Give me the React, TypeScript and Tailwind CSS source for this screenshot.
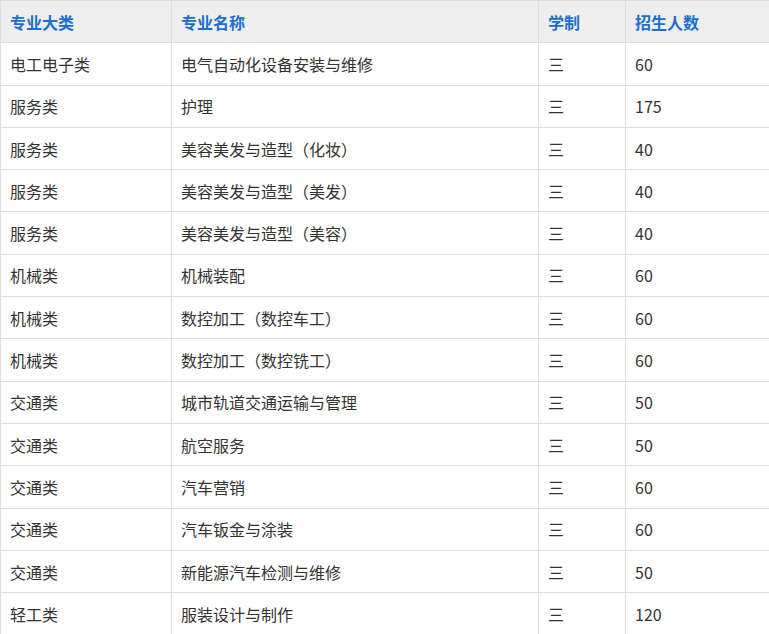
const rows: [string, string, string, string][] = [
  ["电工电子类", "电气自动化设备安装与维修", "三", "60"],
  ["服务类", "护理", "三", "175"],
  ["服务类", "美容美发与造型（化妆）", "三", "40"],
  ["服务类", "美容美发与造型（美发）", "三", "40"],
  ["服务类", "美容美发与造型（美容）", "三", "40"],
  ["机械类", "机械装配", "三", "60"],
  ["机械类", "数控加工（数控车工）", "三", "60"],
  ["机械类", "数控加工（数控铣工）", "三", "60"],
  ["交通类", "城市轨道交通运输与管理", "三", "50"],
  ["交通类", "航空服务", "三", "50"],
  ["交通类", "汽车营销", "三", "60"],
  ["交通类", "汽车钣金与涂装", "三", "60"],
  ["交通类", "新能源汽车检测与维修", "三", "50"],
  ["轻工类", "服装设计与制作", "三", "120"],
];
const font = { fontFamily: '"Noto Sans CJK SC", "Liberation Sans", sans-serif' };
export default function App() {
  const cell = "border border-[#dddddd] pl-[9px] h-[42.3px] align-middle";
  return (
    <div className="w-[769px] h-[634px] overflow-hidden bg-white" style={font}>
      <table className="w-[770px] border-collapse text-[16px] text-[#333333] table-fixed">
        <colgroup>
          <col className="w-[171px]" />
          <col className="w-[367px]" />
          <col className="w-[87px]" />
          <col className="w-[145px]" />
        </colgroup>
        <thead>
          <tr className="bg-[#eeeeee] text-[#1b6fd1] font-bold">
            {["专业大类", "专业名称", "学制", "招生人数"].map((h) => (
              <td key={h} className={cell}>{h}</td>
            ))}
          </tr>
        </thead>
        <tbody>
          {rows.map((r, i) => (
            <tr key={i}>
              {r.map((c, j) => (
                <td key={j} className={cell}>{c}</td>
              ))}
            </tr>
          ))}
        </tbody>
      </table>
    </div>
  );
}
